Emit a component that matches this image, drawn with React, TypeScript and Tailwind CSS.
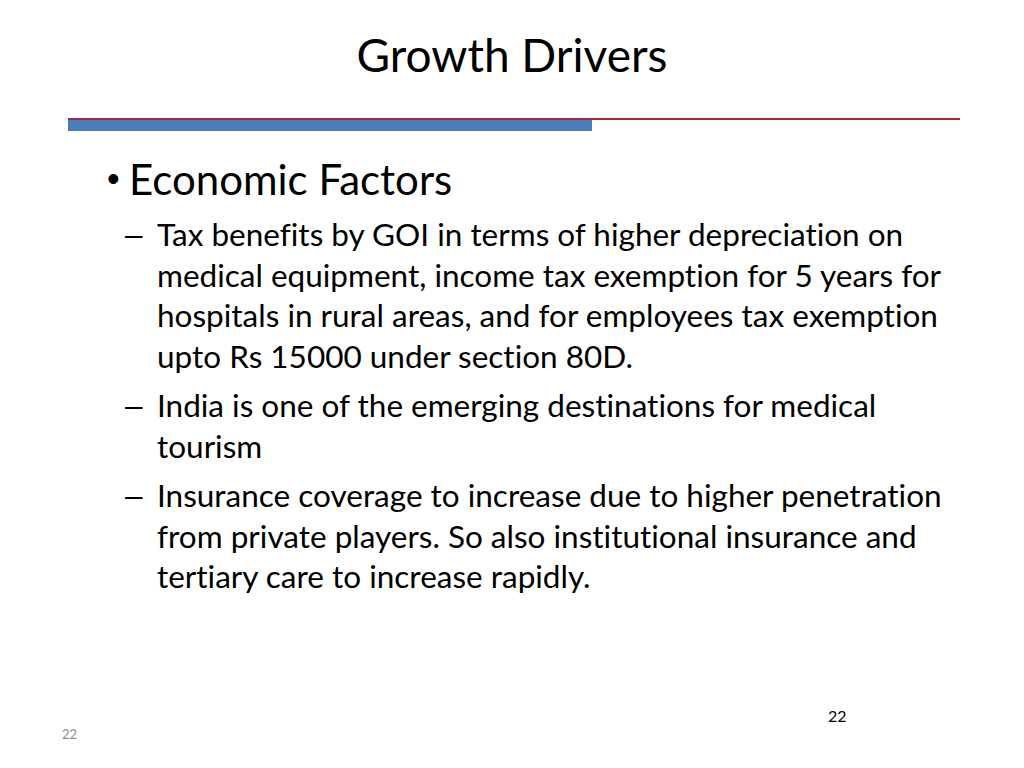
import React from "react";

const items: string[][] = [
  [
    "Tax benefits by GOI in terms of higher depreciation on",
    "medical equipment, income tax exemption for 5 years for",
    "hospitals in rural areas, and for employees tax exemption",
    "upto Rs 15000 under section 80D.",
  ],
  ["India is one of the emerging destinations for medical", "tourism"],
  [
    "Insurance coverage to increase due to higher penetration",
    "from private players. So also institutional insurance and",
    "tertiary care to increase rapidly.",
  ],
];

export default function App() {
  return (
    <div className="relative w-[1024px] h-[768px] bg-white overflow-hidden text-black font-['Lato','Open_Sans',sans-serif] [font-variant-ligatures:none]">
      <h1 className="pt-[27px] text-center text-[46px] leading-[56px] font-normal">
        Growth Drivers
      </h1>

      <div className="mt-[35px] ml-[68px] w-[892px]">
        <div className="h-[2px] bg-[#a3283b]" />
        <div className="h-[11px] w-[524px] bg-[#4a7ebb]" />
      </div>

      <div className="mt-[23px] pl-[107px] pr-[40px]">
        <div className="flex text-[42px] leading-[50px]">
          <span className="w-[22px] shrink-0 font-['Liberation_Sans',sans-serif] text-[36px]">
            •
          </span>
          <span>Economic Factors</span>
        </div>

        <div className="mt-[10px] pl-[18px] flex flex-col gap-[9px]">
          {items.map((lines, i) => (
            <div key={i} className="flex text-[31.5px] leading-[40.5px]">
              <span className="w-[32px] shrink-0 font-['Liberation_Sans',sans-serif]">
                –
              </span>
              <div>
                {lines.map((l) => (
                  <div key={l} className="whitespace-nowrap">
                    {l}
                  </div>
                ))}
              </div>
            </div>
          ))}
        </div>
      </div>

      <div className="absolute left-[828px] top-[706px] text-[16px] leading-[20px]">
        22
      </div>
      <div className="absolute left-[62px] top-[726px] text-[13px] leading-[16px] text-[#8c8c8c]">
        22
      </div>
    </div>
  );
}
